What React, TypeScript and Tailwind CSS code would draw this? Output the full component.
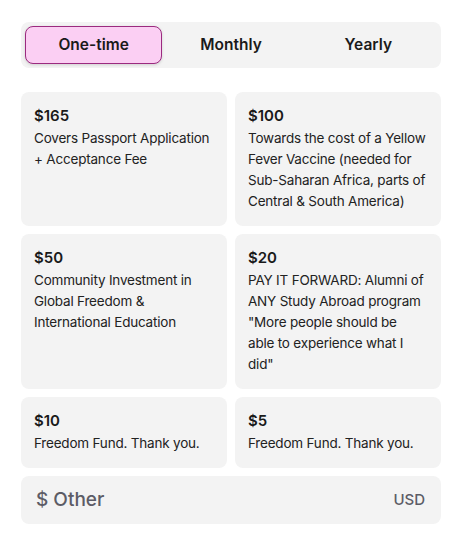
import { useState, type ReactNode } from 'react';

const options: { amount: string; text: ReactNode }[] = [
  { amount: '$165', text: 'Covers Passport Application + Acceptance Fee' },
  {
    amount: '$100',
    text: 'Towards the cost of a Yellow Fever Vaccine (needed for Sub-Saharan Africa, parts of Central & South America)',
  },
  { amount: '$50', text: 'Community Investment in Global Freedom & International Education' },
  {
    amount: '$20',
    text: (
      <>
        PAY IT FORWARD: Alumni of ANY Study Abroad program "More people should be
        <br />
        able to experience what I
        <br />
        did"
      </>
    ),
  },
  { amount: '$10', text: 'Freedom Fund. Thank you.' },
  { amount: '$5', text: 'Freedom Fund. Thank you.' },
];

const tabs = ['One-time', 'Monthly', 'Yearly'];

export default function App() {
  const [tab, setTab] = useState('One-time');

  return (
    <div className="min-h-screen bg-white pt-[22px] font-['Inter',sans-serif] text-[#1a1a1a]">
      <div className="ml-[21px] w-[420px]">
        <div className="flex rounded-lg bg-[#f3f3f3] p-1">
          {tabs.map((t) => (
            <button
              key={t}
              onClick={() => setTab(t)}
              className={
                t === tab
                  ? 'h-[38px] flex-1 rounded-lg border border-[#9b2a7f] bg-[#fbcff3] text-[15.5px] font-semibold shadow-[0_1px_3px_rgba(0,0,0,0.15)]'
                  : 'h-[38px] flex-1 rounded-lg border border-transparent text-[15.5px] font-semibold'
              }
            >
              {t}
            </button>
          ))}
        </div>

        <div className="mt-6 grid grid-cols-2 gap-2">
          {options.map((o, i) => (
            <div key={i} className="rounded-lg bg-[#f3f3f3] px-[13px] pt-[14px] pb-[14px]">
              <div className="text-[15px] font-semibold leading-5">{o.amount}</div>
              <p className="mt-[2px] text-[13.5px] leading-[21px] tracking-[-0.2px] text-[#222]">{o.text}</p>
            </div>
          ))}
        </div>

        <div className="mt-2 flex h-12 items-center justify-between rounded-lg bg-[#f3f3f3] pl-[15px] pr-4">
          <span className="text-[19px] font-medium text-[#5c5c66]">$ Other</span>
          <span className="text-[15px] font-medium text-[#5c5c66]">USD</span>
        </div>
      </div>
    </div>
  );
}
